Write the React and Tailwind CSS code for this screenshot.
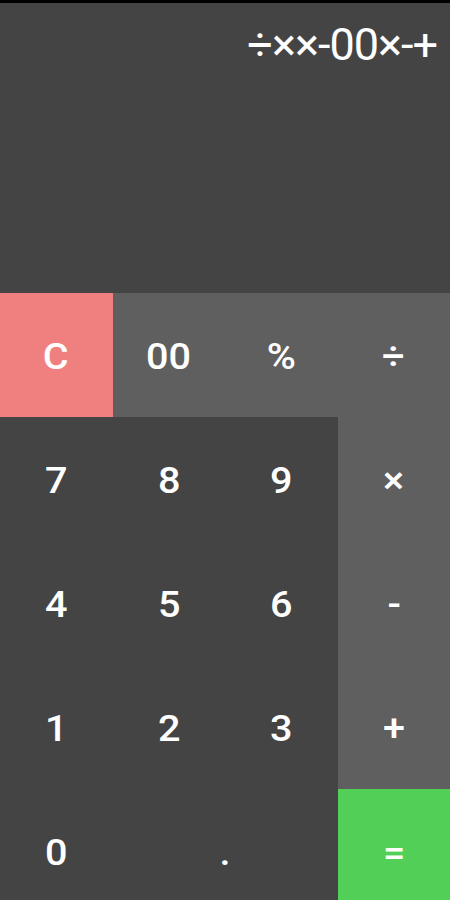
import React from "react";

const Btn = ({ children, className = "" }) => (
  <div className={`flex items-center justify-center h-[124px] pt-[4px] text-white ${className}`}>
    <span className="text-[36px] font-medium leading-none scale-x-[1.1]">{children}</span>
  </div>
);

export default function App() {
  return (
    <div className="w-[450px] h-[900px] overflow-hidden bg-[#444444]" style={{ fontFamily: "Roboto, 'Noto Sans', sans-serif" }}>
      <div className="h-[3px] bg-black" />
      <div className="h-[290px] bg-[#444444] flex justify-end items-start pr-[13px] pt-[19px]">
        <span className="text-white text-[45px] font-normal leading-none tracking-[-1px]">÷××-00×-+</span>
      </div>
      <div className="grid grid-cols-4">
        <Btn className="bg-[#f08080]">C</Btn>
        <Btn className="bg-[#5f5f5f]">00</Btn>
        <Btn className="bg-[#5f5f5f]">%</Btn>
        <Btn className="bg-[#5f5f5f]">÷</Btn>

        <Btn className="bg-[#444444]">7</Btn>
        <Btn className="bg-[#444444]">8</Btn>
        <Btn className="bg-[#444444]">9</Btn>
        <Btn className="bg-[#5f5f5f]">×</Btn>

        <Btn className="bg-[#444444]">4</Btn>
        <Btn className="bg-[#444444]">5</Btn>
        <Btn className="bg-[#444444]">6</Btn>
        <Btn className="bg-[#5f5f5f]">-</Btn>

        <Btn className="bg-[#444444]">1</Btn>
        <Btn className="bg-[#444444]">2</Btn>
        <Btn className="bg-[#444444]">3</Btn>
        <Btn className="bg-[#5f5f5f]">+</Btn>

        <Btn className="bg-[#444444]">0</Btn>
        <Btn className="bg-[#444444] col-span-2">.</Btn>
        <Btn className="bg-[#52cf56]">=</Btn>
      </div>
    </div>
  );
}
